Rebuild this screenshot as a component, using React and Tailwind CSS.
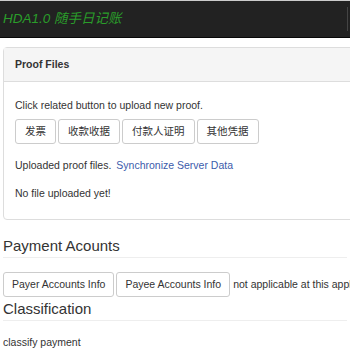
const proofButtons = ["发票", "收款收据", "付款人证明", "其他凭据"];

const Btn = ({ children, className = "px-[9px]" }) => (
    <button className={`h-[25px] border border-[#ccc] rounded-[3px] bg-white text-[10.5px] text-[#333] leading-none whitespace-nowrap ${className}`}>
        {children}
    </button>
);

export default function App() {
    return (
        <div className="w-[350px] h-[350px] overflow-hidden bg-white text-[#333] text-[10.5px] font-['Liberation_Sans','Noto_Sans_CJK_SC',sans-serif]">
            {/* navbar */}
            <div className="h-[38px] bg-[#222] border-t border-[#ccc] border-b border-b-[#080808] flex items-center justify-between">
                <span className="ml-[3px] italic text-[13.5px] text-[#2a9d2a]">HDA1.0 随手日记账</span>
                <span className="w-[3px] h-[24px] border-l border-[#444]"></span>
            </div>

            {/* proof files panel */}
            <div className="mt-[9px] ml-[3px] w-[400px] border border-[#ddd] rounded-[4px]">
                <div className="h-[34px] bg-[#f5f5f5] border-b border-[#ddd] flex items-center px-[11px] font-bold">
                    Proof Files
                </div>
                <div className="px-[11px] pt-[16px] pb-[19px]">
                    <p className="leading-[14px]">Click related button to upload new proof.</p>
                    <div className="flex gap-[2px] mt-[7px]">
                        {proofButtons.map(b => (
                            <Btn key={b}>{b}</Btn>
                        ))}
                    </div>
                    <div className="flex gap-[5px] mt-[14px] leading-[14px]">
                        <span>Uploaded proof files.</span>
                        <span className="text-[#3b5bab]">Synchronize Server Data</span>
                    </div>
                    <p className="mt-[14px] leading-[14px]">No file uploaded yet!</p>
                </div>
            </div>

            {/* payment accounts */}
            <h3 className="mt-[17px] mx-[3px] text-[15px] leading-[18px] pb-[2px] border-b border-[#eee]">Payment Acounts</h3>
            <div className="flex items-center gap-[2px] mt-[14px] ml-[3px] whitespace-nowrap">
                <Btn className="px-[8px]">Payer Accounts Info</Btn>
                <Btn className="px-[8px]">Payee Accounts Info</Btn>
                <span className="ml-[1px]">not applicable at this application</span>
            </div>

            {/* classification */}
            <h3 className="mt-[3px] mx-[3px] text-[15px] leading-[18px] pb-[2px] border-b border-[#eee]">Classification</h3>
            <p className="mt-[14px] ml-[3px] leading-[14px]">classify payment</p>
        </div>
    );
}
